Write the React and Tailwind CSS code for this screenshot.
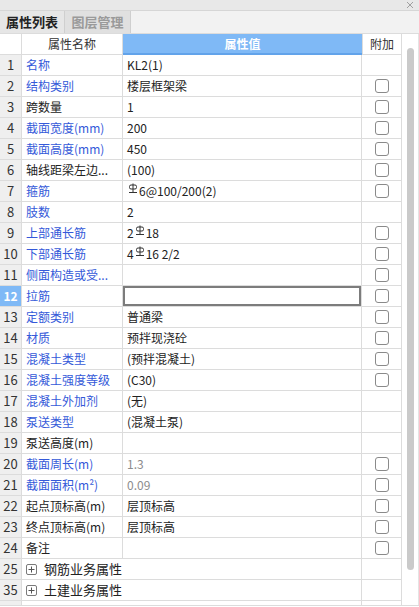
import React from "react";

// 钢筋等级符号 (HRB400)
function Rebar() {
  return (
    <svg width="10" height="11" viewBox="0 0 10 11" className="inline-block align-top mt-[1px] mx-[1px]">
      <rect x="1.5" y="2" width="7" height="4" rx="1.5" fill="none" stroke="#333" strokeWidth="1" />
      <line x1="5" y1="0.5" x2="5" y2="9.5" stroke="#333" strokeWidth="1" />
      <line x1="1" y1="9.5" x2="9" y2="9.5" stroke="#333" strokeWidth="1" />
    </svg>
  );
}

const R = <Rebar />;

const rows = [
  { n: "1", name: "名称", blue: true, value: "KL2(1)" },
  { n: "2", name: "结构类别", blue: true, value: "楼层框架梁", cb: true },
  { n: "3", name: "跨数量", value: "1", cb: true },
  { n: "4", name: "截面宽度(mm)", blue: true, value: "200", cb: true },
  { n: "5", name: "截面高度(mm)", blue: true, value: "450", cb: true },
  { n: "6", name: "轴线距梁左边...", value: "(100)", cb: true },
  { n: "7", name: "箍筋", blue: true, value: <>{R}6@100/200(2)</>, cb: true },
  { n: "8", name: "肢数", blue: true, value: "2" },
  { n: "9", name: "上部通长筋", blue: true, value: <>2{R}18</>, cb: true },
  { n: "10", name: "下部通长筋", blue: true, value: <>4{R}16 2/2</>, cb: true },
  { n: "11", name: "侧面构造或受...", blue: true, value: "", cb: true },
  { n: "12", name: "拉筋", blue: true, value: "", cb: true, sel: true },
  { n: "13", name: "定额类别", blue: true, value: "普通梁", cb: true },
  { n: "14", name: "材质", blue: true, value: "预拌现浇砼", cb: true },
  { n: "15", name: "混凝土类型", blue: true, value: "(预拌混凝土)", cb: true },
  { n: "16", name: "混凝土强度等级", blue: true, value: "(C30)", cb: true },
  { n: "17", name: "混凝土外加剂", blue: true, value: "(无)" },
  { n: "18", name: "泵送类型", blue: true, value: "(混凝土泵)" },
  { n: "19", name: "泵送高度(m)", value: "" },
  { n: "20", name: "截面周长(m)", blue: true, value: "1.3", grey: true, cb: true },
  { n: "21", name: <>截面面积(m²)</>, blue: true, value: "0.09", grey: true, cb: true },
  { n: "22", name: "起点顶标高(m)", value: "层顶标高", cb: true },
  { n: "23", name: "终点顶标高(m)", value: "层顶标高", cb: true },
  { n: "24", name: "备注", value: "", cb: true },
  { n: "25", name: "钢筋业务属性", group: true },
  { n: "35", name: "土建业务属性", group: true },
  { n: "", name: "", group: true },
];

function PlusBox() {
  return (
    <span className="w-[11px] h-[11px] border border-[#7a7a7a] rounded-[2px] flex items-center justify-center shrink-0">
      <svg width="7" height="7" viewBox="0 0 7 7">
        <line x1="0.5" y1="3.5" x2="6.5" y2="3.5" stroke="#555" strokeWidth="1" />
        <line x1="3.5" y1="0.5" x2="3.5" y2="6.5" stroke="#555" strokeWidth="1" />
      </svg>
    </span>
  );
}

export default function App() {
  const font = { fontFamily: '"Noto Sans CJK SC", "Microsoft YaHei", sans-serif' };
  return (
    <div className="w-[419px] h-[607px] overflow-hidden bg-white text-[12px] text-[#333]" style={font}>
      {/* 顶部标题栏 */}
      <div className="h-[11px] bg-[#e8e8e8] border-b border-[#d6d6d6] flex justify-end items-center pr-[5px]">
        <svg width="8" height="8" viewBox="0 0 8 8">
          <line x1="1" y1="1" x2="7" y2="7" stroke="#a0a0a0" strokeWidth="1" />
          <line x1="7" y1="1" x2="1" y2="7" stroke="#a0a0a0" strokeWidth="1" />
        </svg>
      </div>

      {/* 页签 */}
      <div className="h-[23px] bg-[#f2f2f2] flex border-b border-[#dcdcdc]">
        <div className="w-[65px] bg-[#e6e6e6] border-r border-[#cfcfcf] flex items-center justify-center text-[13px] font-bold text-[#222]">
          属性列表
        </div>
        <div className="w-[66px] bg-[#e0e0e0] border-r border-[#cfcfcf] flex items-center justify-center text-[13px] font-bold text-[#9a9a9a]">
          图层管理
        </div>
      </div>

      <div className="flex h-[572px] border-b border-[#dcdcdc]">
        {/* 表格 */}
        <div className="w-[402px] overflow-hidden">
          {/* 表头 */}
          <div className="flex h-[21px]">
            <div className="w-[22px] border-r border-b border-[#dcdcdc]" />
            <div className="w-[101px] border-r border-b border-[#dcdcdc] flex items-center justify-center">
              属性名称
            </div>
            <div className="w-[239px] bg-[#7fb9f6] border-b-2 border-[#62a3ea] flex items-center justify-center text-white font-bold">
              属性值
            </div>
            <div className="w-[40px] border-l border-r border-b border-[#dcdcdc] flex items-center justify-center">
              附加
            </div>
          </div>

          {rows.map((r, i) => (
            <div key={i} className="flex h-[21px]">
              <div
                className={
                  r.sel
                    ? "w-[22px] bg-[#7fb9f6] text-white font-bold border-r border-b border-[#dcdcdc] flex items-center justify-center"
                    : "w-[22px] bg-[#efefef] border-r border-b border-[#dcdcdc] flex items-center justify-center text-[13px]"
                }
              >
                {r.n}
              </div>
              {r.group ? (
                <div className="w-[380px] border-b border-[#dcdcdc] flex">
                  <div className="w-[340px] border-r border-[#dcdcdc] flex items-center pl-[4px] gap-[7px] text-[13px] text-[#222]">
                    <PlusBox />
                    {r.name}
                  </div>
                  <div className="w-[40px] border-r border-[#dcdcdc]" />
                </div>
              ) : (
                <>
                  <div
                    className={
                      r.blue
                        ? "w-[101px] border-r border-b border-[#dcdcdc] flex items-center pl-[4px] whitespace-nowrap overflow-hidden text-[#3459d9]"
                        : "w-[101px] border-r border-b border-[#dcdcdc] flex items-center pl-[4px] whitespace-nowrap overflow-hidden text-[#222]"
                    }
                  >
                    {r.name}
                  </div>
                  <div className="w-[239px] border-r border-b border-[#dcdcdc] flex items-center whitespace-nowrap">
                    {r.sel ? (
                      <div className="w-full h-[20px] border-2 border-[#7c7c7c]" />
                    ) : (
                      <span className={r.grey ? "pl-[4px] text-[#8c8c8c]" : "pl-[4px] text-[#222]"}>{r.value}</span>
                    )}
                  </div>
                  <div className="w-[40px] border-r border-b border-[#dcdcdc] flex items-center justify-center">
                    {r.cb && <span className="w-[14px] h-[14px] border border-[#8a8a8a] rounded-[3px] bg-white" />}
                  </div>
                </>
              )}
            </div>
          ))}
        </div>

        {/* 滚动条 */}
        <div className="w-[17px] border-r border-[#e4e4e4] pl-[5px] pt-[14px]">
          <div className="w-[7px] h-[522px] bg-[#cacaca] rounded-[4px]" />
        </div>
      </div>
    </div>
  );
}
